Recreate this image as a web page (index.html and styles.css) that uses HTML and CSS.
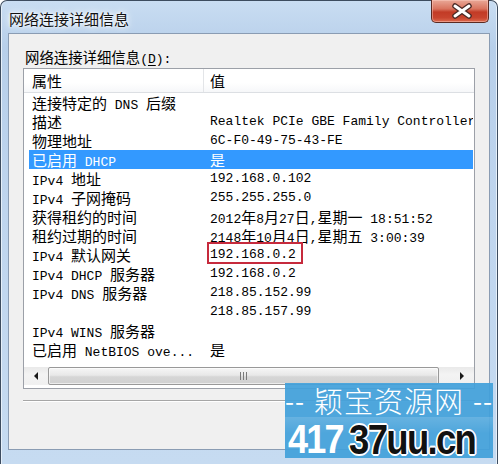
FILE: index.html
```html
<!DOCTYPE html>
<html lang="zh-CN">
<head>
<meta charset="utf-8">
<title>网络连接详细信息</title>
<link rel="stylesheet" href="styles.css">
</head>
<body>
<div class="window">
  <div class="titlebar">
    <div class="title">网络连接详细信息</div>
    <div class="close">
      <svg width="58" height="24" viewBox="0 0 58 24">
        <path d="M23 7 L37 17 M37 7 L23 17" stroke="#4a2a26" stroke-width="5.5" stroke-linecap="round"/>
        <path d="M23 7 L37 17 M37 7 L23 17" stroke="#ffffff" stroke-width="3" stroke-linecap="round"/>
      </svg>
    </div>
  </div>
  <div class="client">
    <div class="label"><span class="z">网络连接详细信息</span>(<u>D</u>):</div>
    <div class="list">
      <div class="head">
        <div class="h1"><span class="z">属性</span></div>
        <div class="h2"><span class="z">值</span></div>
      </div>
      <div class="rows">
        <div class="row"><div class="k"><span class="z">连接特定的</span> DNS <span class="z">后缀</span></div><div class="v"></div></div>
        <div class="row"><div class="k"><span class="z">描述</span></div><div class="v">Realtek PCIe GBE Family Controller</div></div>
        <div class="row"><div class="k"><span class="z">物理地址</span></div><div class="v">6C-F0-49-75-43-FE</div></div>
        <div class="row sel"><div class="k"><span class="z">已启用</span> DHCP</div><div class="v"><span class="z">是</span></div></div>
        <div class="row"><div class="k">IPv4 <span class="z">地址</span></div><div class="v">192.168.0.102</div></div>
        <div class="row"><div class="k">IPv4 <span class="z">子网掩码</span></div><div class="v">255.255.255.0</div></div>
        <div class="row"><div class="k"><span class="z">获得租约的时间</span></div><div class="v">2012<span class="z">年</span>8<span class="z">月</span>27<span class="z">日</span>,<span class="z">星期一</span> 18:51:52</div></div>
        <div class="row"><div class="k"><span class="z">租约过期的时间</span></div><div class="v">2148<span class="z">年</span>10<span class="z">月</span>4<span class="z">日</span>,<span class="z">星期五</span> 3:00:39</div></div>
        <div class="row"><div class="k">IPv4 <span class="z">默认网关</span></div><div class="v">192.168.0.2</div><span class="mark"></span></div>
        <div class="row"><div class="k">IPv4 DHCP <span class="z">服务器</span></div><div class="v">192.168.0.2</div></div>
        <div class="row"><div class="k">IPv4 DNS <span class="z">服务器</span></div><div class="v">218.85.152.99</div></div>
        <div class="row"><div class="k"></div><div class="v">218.85.157.99</div></div>
        <div class="row"><div class="k">IPv4 WINS <span class="z">服务器</span></div><div class="v"></div></div>
        <div class="row"><div class="k"><span class="z">已启用</span> NetBIOS ove...</div><div class="v"><span class="z">是</span></div></div>
      </div>
      <div class="hscroll">
        <div class="arrow">
          <svg width="23" height="18" viewBox="0 0 23 18"><path d="M10 9 L14 5 L14 13 Z" fill="#1a1a1a"/></svg>
        </div>
        <div class="thumb">
          <svg width="10" height="8" viewBox="0 0 10 8"><path d="M1.5 0 V8 M4.5 0 V8 M7.5 0 V8" stroke="#7a7a7a" stroke-width="1"/></svg>
        </div>
        <div class="track"></div>
        <div class="arrow">
          <svg width="23" height="18" viewBox="0 0 23 18"><path d="M9 5 L13 9 L9 13 Z" fill="#1a1a1a"/></svg>
        </div>
      </div>
    </div>
    <div class="sep"></div>
  </div>
  <div class="wm">
    <div class="wm-top"><span class="dash">--</span><span class="wm-cn">颖宝资源网</span><span class="dash">--</span></div>
    <div class="wm-bot"><span class="n417">417</span><span class="n37">37uu.cn</span></div>
  </div>
</div>
</body>
</html>
```
FILE: styles.css
```css
html, body {
  margin: 0;
  padding: 0;
}
body {
  width: 498px;
  height: 464px;
  overflow: hidden;
  background: #ffffff;
  font-family: "Liberation Mono", "Noto Sans CJK SC", monospace;
  font-size: 13px;
  color: #000;
}
.z {
  font-family: "Noto Sans CJK SC", sans-serif;
  font-size: 15px;
}
.window {
  position: relative;
  width: 498px;
  height: 464px;
  box-sizing: border-box;
  border: 1px solid #3d4c5f;
  border-bottom: none;
  border-radius: 7px 7px 0 0;
  background: linear-gradient(180deg, #c9ddf2 0%, #b7cfea 10%, #bfd5ee 45%, #c6dbf1 100%);
  display: flex;
  flex-direction: column;
  padding: 0 7px 14px 7px;
  box-shadow: inset 1px 0 0 #e6f0fa, inset -1px 0 0 #e6f0fa;
}
.titlebar {
  height: 32px;
  display: flex;
  justify-content: space-between;
  align-items: flex-start;
  flex-shrink: 0;
}
.title {
  margin-top: 7px;
  margin-left: 1px;
  line-height: 22px;
  font-family: "Noto Sans CJK SC", sans-serif;
  font-size: 15px;
  color: #111;
  text-shadow: 0 0 6px #ffffff, 0 0 3px #ffffff, 0 0 10px #eaf3fc;
}
.close {
  width: 58px;
  height: 23px;
  margin-top: -1px;
  margin-right: 1px;
  box-sizing: border-box;
  border: 1px solid #5a2a22;
  border-top: none;
  border-radius: 0 0 5px 5px;
  background: linear-gradient(180deg, #e9a897 0%, #d9745f 40%, #c23b26 55%, #c8442e 80%, #dc6a4f 100%);
  box-shadow: inset 0 0 0 1px rgba(255, 210, 200, 0.45);
}
.close svg {
  display: block;
  margin-top: -1px;
}
.client {
  flex: 1;
  background: #f0f0f0;
  border: 1px solid #8a9cb3;
  padding: 13px 14px 0 14px;
  display: flex;
  flex-direction: column;
}
.label {
  height: 20px;
  line-height: 20px;
  margin-left: 2px;
  white-space: nowrap;
}
.label .z {
  font-size: 14.4px;
}
.label u {
  text-underline-offset: 2px;
}
.list {
  margin-top: 1px;
  height: 321px;
  box-sizing: border-box;
  border: 1px solid #9ca0a8;
  background: #ffffff;
  display: flex;
  flex-direction: column;
}
.head {
  height: 24px;
  box-sizing: border-box;
  border-bottom: 1px solid #dcdfe3;
  display: flex;
  flex-shrink: 0;
  background: linear-gradient(180deg, #ffffff 0%, #ffffff 60%, #f6f7f9 100%);
}
.h1 {
  width: 180px;
  box-sizing: border-box;
  padding-left: 8px;
  line-height: 23px;
  border-right: 1px solid #e3e5e8;
}
.h2 {
  flex: 1;
  padding-left: 6px;
  line-height: 23px;
}
.rows {
  height: 274px;
  flex-shrink: 0;
  overflow: hidden;
}
.row {
  position: relative;
  height: 19px;
  line-height: 19px;
  margin: 0 1px 0 5px;
  display: flex;
  white-space: nowrap;
}
.row .k {
  width: 181px;
  flex-shrink: 0;
  box-sizing: border-box;
  padding-left: 3px;
  overflow: hidden;
}
.row .v {
  flex: 1;
  min-width: 0;
  overflow: hidden;
}
.row.sel {
  background: #3399ff;
  color: #ffffff;
}
.mark {
  position: absolute;
  left: 178px;
  top: -3px;
  width: 96px;
  height: 22px;
  box-sizing: border-box;
  border: 2px solid #c62a3c;
}
.hscroll {
  height: 18px;
  flex-shrink: 0;
  display: flex;
  background: linear-gradient(180deg, #e9e9e9 0%, #f3f3f3 40%, #f0f0f0 100%);
}
.arrow {
  width: 23px;
  height: 18px;
  flex-shrink: 0;
}
.arrow svg {
  display: block;
}
.thumb {
  width: 391px;
  margin-left: 1px;
  box-sizing: border-box;
  border: 1px solid #999999;
  border-radius: 2px;
  background: linear-gradient(180deg, #f6f6f6 0%, #e8e8e8 45%, #d6d6d6 55%, #d0d0d0 100%);
  display: flex;
  align-items: center;
  justify-content: center;
  box-shadow: inset 0 0 0 1px rgba(255, 255, 255, 0.6);
}
.thumb svg {
  display: block;
}
.track {
  flex: 1;
}
.sep {
  margin-top: 11px;
  height: 0;
  border-top: 1px solid #a6a6a6;
  border-bottom: 1px solid #ffffff;
}
.wm {
  position: absolute;
  left: 284px;
  top: 382px;
  width: 208px;
  height: 75px;
  background: rgba(66, 160, 218, 0.93);
  overflow: hidden;
}
.wm-top {
  height: 34px;
  display: flex;
  align-items: center;
  justify-content: space-between;
  color: #ffffff;
  font-family: "Noto Sans CJK SC", sans-serif;
  font-size: 28px;
  line-height: 34px;
  white-space: nowrap;
}
.dash {
  letter-spacing: 1px;
  font-size: 26px;
}
.wm-cn {
  font-size: 29px;
  font-weight: 300;
  letter-spacing: 1px;
}
.wm-bot {
  height: 41px;
  display: flex;
  align-items: flex-end;
  white-space: nowrap;
  line-height: 38px;
  background: linear-gradient(180deg, rgba(255, 255, 255, 0.14) 0%, rgba(255, 255, 255, 0) 40%);
}
.n417 {
  display: inline-block;
  width: 61px;
  margin-left: 3px;
  font-family: "Liberation Sans", sans-serif;
  font-weight: bold;
  font-size: 40px;
  letter-spacing: -2px;
  color: #ffffff;
  transform: scaleX(0.9);
  transform-origin: left bottom;
}
.n37 {
  display: inline-block;
  font-family: "Liberation Sans", sans-serif;
  font-weight: bold;
  font-size: 43px;
  letter-spacing: -2px;
  color: #111111;
  transform: scaleX(0.85);
  transform-origin: left bottom;
  text-shadow: 1px 1px 0 #fff, -1px -1px 0 #fff, 1px -1px 0 #fff, -1px 1px 0 #fff, 0 2px 0 #fff, 2px 0 0 #fff, 0 -2px 0 #fff, -2px 0 0 #fff;
}
```
